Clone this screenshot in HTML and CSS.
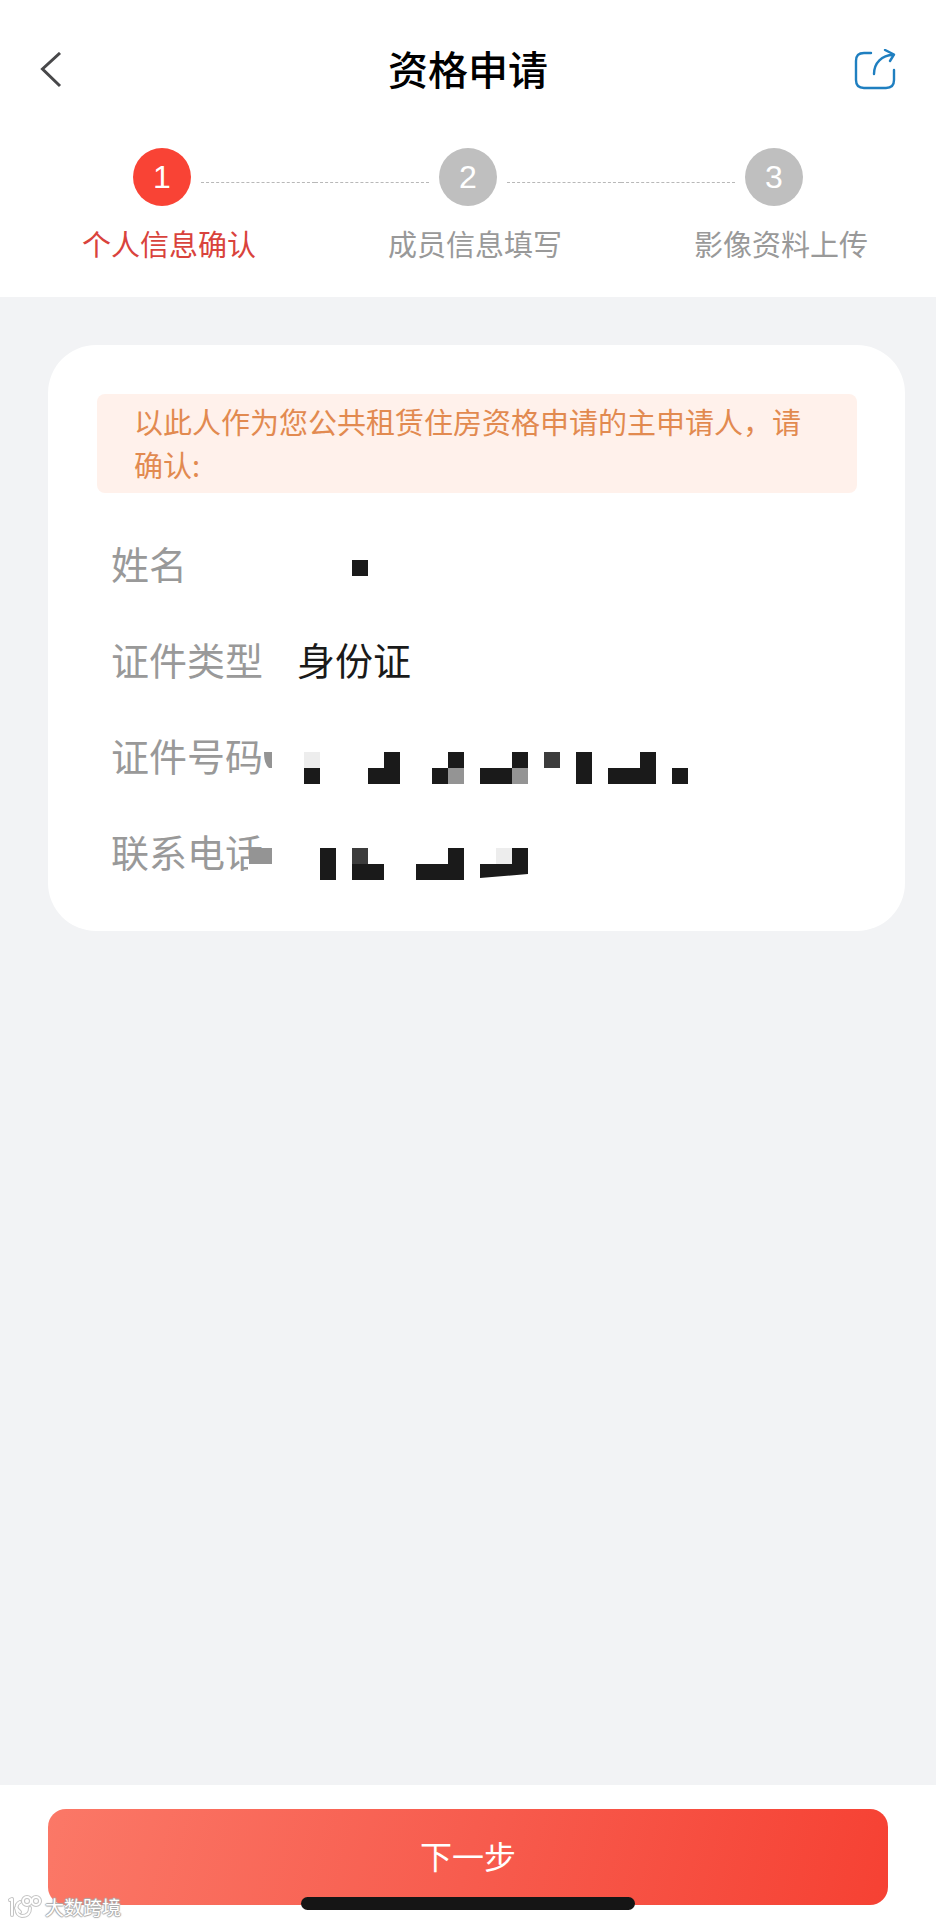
FILE: index.html
```html
<!doctype html>
<html lang="zh-CN">
<head>
    <meta charset="UTF-8">
    <meta name="viewport" content="width=device-width, initial-scale=1.0">
    <title>资格申请</title>
    <link rel="stylesheet" href="styles.css">
</head>
<body>
    <header class="header">
        <div class="navbar">
            <button class="icon-btn" type="button" aria-label="返回">
                <svg width="22" height="36" viewBox="0 0 22 36">
                    <path d="M20 1 L2.500 17 L20 34" fill="none" stroke="#48484a" stroke-width="3"/>
                </svg>
            </button>
            <h1 class="title">资格申请</h1>
            <button class="icon-btn" type="button" aria-label="分享">
                <svg width="42" height="42" viewBox="0 0 42 42">
                    <g fill="none" stroke="#1f7fc0" stroke-width="2.400" stroke-linecap="round" stroke-linejoin="round">
                        <path d="M17 4 H10 Q2 4 2 12 V31 Q2 39 10 39 H32 Q40 39 40 31 V21"/>
                        <path d="M20 25 C20 14 28 6 39 6"/>
                        <path d="M31 1 L40 5.500 L36 12"/>
                    </g>
                </svg>
            </button>
        </div>
        <ol class="steps">
            <li class="step active">
                <div class="track"><span class="num">1</span></div>
                <p class="step-name">个人信息确认</p>
            </li>
            <li class="step">
                <div class="track"><span class="num">2</span></div>
                <p class="step-name">成员信息填写</p>
            </li>
            <li class="step">
                <div class="track"><span class="num">3</span></div>
                <p class="step-name">影像资料上传</p>
            </li>
        </ol>
    </header>

    <main class="main">
        <section class="card">
            <p class="notice">以此人作为您公共租赁住房资格申请的主申请人，请确认:</p>
            <dl class="info">
                <dt>姓名</dt>
                <dd>
                    <svg class="mosaic" width="400" height="96" viewBox="0 0 400 96">
                        <rect x="55" y="43" width="16" height="16"/>
                    </svg>
                </dd>
                <dt>证件类型</dt>
                <dd>身份证</dd>
                <dt>证件号码</dt>
                <dd>
                    <svg class="mosaic" width="400" height="96" viewBox="0 0 400 96">
                        <path class="mid" d="M-33 43 h8 v16 h-3 q-5 -4 -5 -16 z"/>
                        <rect class="light" x="7" y="43" width="16" height="16"/>
                        <rect x="7" y="59" width="16" height="16"/>
                        <path d="M71 59 h16 v-16 h16 v32 h-32 z"/>
                        <path d="M135 59 h16 v-16 h16 v16 h-16 v16 h-16 z"/>
                        <rect class="mid" x="151" y="59" width="16" height="16"/>
                        <path d="M183 59 h32 v-16 h16 v16 h-16 v16 h-32 z"/>
                        <rect class="mid" x="215" y="59" width="16" height="16"/>
                        <rect class="dim" x="247" y="43" width="16" height="16"/>
                        <rect x="279" y="43" width="16" height="32"/>
                        <path d="M311 59 h32 v-16 h16 v32 h-48 z"/>
                        <rect x="375" y="59" width="16" height="16"/>
                    </svg>
                </dd>
                <dt>联系电话</dt>
                <dd>
                    <svg class="mosaic" width="400" height="96" viewBox="0 0 400 96">
                        <rect class="blank" x="-49" y="59" width="24" height="12"/>
                        <rect class="mid" x="-48" y="43" width="23" height="16"/>
                        <rect x="23" y="43" width="16" height="32"/>
                        <rect class="dim" x="55" y="43" width="16" height="16"/>
                        <rect x="55" y="59" width="32" height="16"/>
                        <path d="M119 59 h32 v-16 h16 v32 h-48 z"/>
                        <rect class="light" x="199" y="43" width="16" height="16"/>
                        <path d="M183 59 h32 v-16 h16 v26 l-48 4 z"/>
                    </svg>
                </dd>
            </dl>
        </section>
    </main>

    <footer class="footer">
        <button class="next" type="button">下一步</button>
        <div class="home-bar"></div>
        <div class="watermark">
            <svg width="34" height="24" viewBox="0 0 34 24">
                <g fill="none" stroke-linecap="round" stroke-linejoin="round">
                    <g stroke="#c4c4c4" stroke-width="4">
                        <path d="M1 5 L3 4 V20"/>
                        <path d="M11 7 C6 9 6 20 13 21 C19 21 21 17 21 13"/>
                        <path d="M7 13 L11 17"/>
                        <circle cx="18" cy="6" r="4"/>
                        <circle cx="27" cy="6" r="4"/>
                    </g>
                    <g stroke="#fff" stroke-width="2">
                        <path d="M1 5 L3 4 V20"/>
                        <path d="M11 7 C6 9 6 20 13 21 C19 21 21 17 21 13"/>
                        <path d="M7 13 L11 17"/>
                        <circle cx="18" cy="6" r="4"/>
                        <circle cx="27" cy="6" r="4"/>
                    </g>
                </g>
            </svg>
            <span>大数跨境</span>
        </div>
    </footer>
</body>
</html>
```

FILE: styles.css
```css
* {
    box-sizing: border-box;
}

body {
    margin: 0;
    min-height: 100vh;
    display: flex;
    flex-direction: column;
    background-color: #f2f3f5;
    color: #1a1a1a;
    font-family: "Noto Sans CJK SC", sans-serif;
}

h1,
p,
ol,
dl,
dd {
    margin: 0;
    padding: 0;
}

button {
    border: 0;
    padding: 0;
    font-family: inherit;
}

/* header */
.header {
    background-color: #fff;
    padding-bottom: 32px;
}

.navbar {
    height: 140px;
    padding: 0 40px;
    display: flex;
    align-items: center;
    justify-content: space-between;
}

.icon-btn {
    width: 42px;
    height: 42px;
    display: flex;
    align-items: center;
    background: none;
}

.title {
    padding-bottom: 4px;
    font-size: 40px;
    line-height: 56px;
    font-weight: 500;
    color: #000;
}

.steps {
    display: flex;
    margin-top: 8px;
    padding: 0 9px;
    list-style: none;
}

.step {
    flex: 1;
    text-align: center;
    color: #999;
}

.track {
    display: flex;
    align-items: center;
    gap: 10px;
}

/* each step draws half of the line on either side of its number */
.track::before,
.track::after {
    content: "";
    flex: 1;
    margin-top: 10px;
    border-top: 1px dashed #b8b8b8;
}

.step:first-child .track::before,
.step:last-child .track::after {
    border-color: transparent;
}

.num {
    width: 58px;
    height: 58px;
    border-radius: 50%;
    background-color: #bfbfbf;
    color: #fff;
    font-family: "Liberation Sans", sans-serif;
    font-size: 32px;
    line-height: 58px;
}

.step-name {
    margin-top: 15px;
    padding-left: 14px;
    font-size: 29px;
    line-height: 44px;
}

.active {
    color: #d9433c;
}

.active .num {
    background-color: #f94335;
}

/* content */
.main {
    flex: 1;
    padding: 48px 31px 48px 48px;
}

.card {
    padding: 49px 48px 30px 49px;
    border-radius: 48px;
    background-color: #fff;
}

.notice {
    padding: 6px 36px 7px 37px;
    border-radius: 8px;
    background-color: #fff1eb;
    color: #e28a50;
    font-size: 29px;
    line-height: 43px;
}

.info {
    display: grid;
    grid-template-columns: 186px 1fr;
    grid-auto-rows: 96px;
    margin-top: 24px;
    padding-left: 14px;
    font-size: 38px;
    line-height: 92px;
}

.info dt {
    color: #999;
}

.mosaic {
    display: block;
    overflow: visible;
    fill: #1a1a1a;
}

.mosaic .mid {
    fill: #949494;
}

.mosaic .dim {
    fill: #3c3c3c;
}

.mosaic .light {
    fill: #ededed;
}

.mosaic .blank {
    fill: #fff;
}

/* footer */
.footer {
    position: relative;
    padding: 24px 48px 19px;
    background-color: #fff;
}

.next {
    display: block;
    width: 100%;
    height: 96px;
    padding-bottom: 4px;
    border-radius: 18px;
    background: linear-gradient(105deg, #fb7867, #f75c4e 50%, #f64133);
    color: #fff;
    font-size: 32px;
    line-height: 92px;
}

.home-bar {
    position: absolute;
    left: 50%;
    bottom: 14px;
    width: 334px;
    height: 13px;
    border-radius: 7px;
    background-color: #151515;
    transform: translateX(-50%);
}

.watermark {
    position: absolute;
    left: 9px;
    bottom: 5px;
    display: flex;
    align-items: center;
    gap: 2px;
    color: #fff;
    font-size: 19px;
    line-height: 24px;
    text-shadow: 1px 0 1px #aaa, -1px 0 1px #aaa, 0 1px 1px #aaa, 0 -1px 1px #aaa;
}

.watermark svg {
    overflow: visible;
}
```
